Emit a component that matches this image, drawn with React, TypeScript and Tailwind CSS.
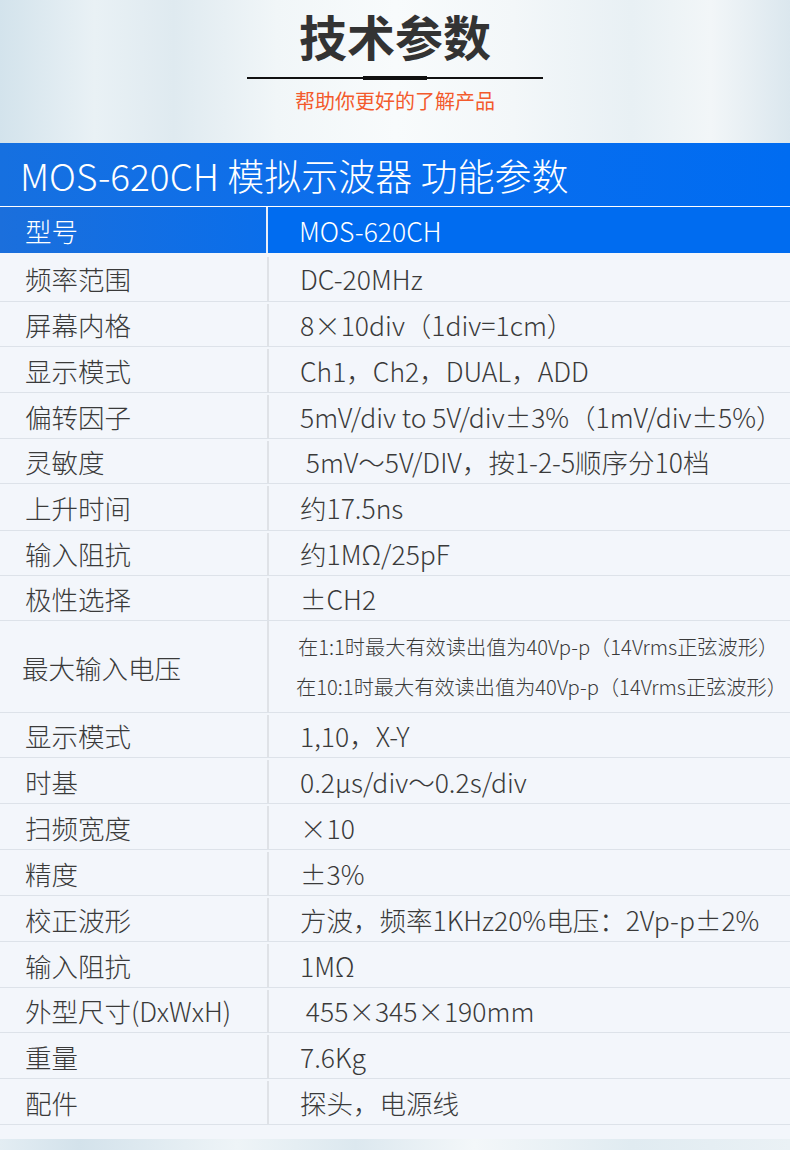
import React from "react";

const rows: { k: string; v: string | string[]; h: string }[] = [
  { k: "频率范围", v: "DC-20MHz", h: "h-[49px] pt-[4px]" },
  { k: "屏幕内格", v: "8×10div（1div=1cm）", h: "h-[45px] pt-[2px]" },
  { k: "显示模式", v: "Ch1，Ch2，DUAL，ADD", h: "h-[46px] pt-[2px]" },
  { k: "偏转因子", v: "5mV/div to 5V/div±3%（1mV/div±5%）", h: "h-[46px] pt-[2px]" },
  { k: "灵敏度", v: " 5mV～5V/DIV，按1-2-5顺序分10档", h: "h-[45px] pt-[2px]" },
  { k: "上升时间", v: "约17.5ns", h: "h-[47px] pt-[2px]" },
  { k: "输入阻抗", v: "约1MΩ/25pF", h: "h-[45px] pt-[2px]" },
  { k: "极性选择", v: "±CH2", h: "h-[45px] pt-[2px]" },
  {
    k: "最大输入电压",
    v: [
      "在1:1时最大有效读出值为40Vp-p（14Vrms正弦波形）",
      "在10:1时最大有效读出值为40Vp-p（14Vrms正弦波形）",
    ],
    h: "h-[92px]",
  },
  { k: "显示模式", v: "1,10，X-Y", h: "h-[45px] pt-[2px]" },
  { k: "时基", v: "0.2μs/div～0.2s/div", h: "h-[46px] pt-[2px]" },
  { k: "扫频宽度", v: "×10", h: "h-[46px] pt-[2px]" },
  { k: "精度", v: "±3%", h: "h-[46px] pt-[2px]" },
  { k: "校正波形", v: "方波，频率1KHz20%电压：2Vp-p±2%", h: "h-[46px] pt-[2px]" },
  { k: "输入阻抗", v: "1MΩ", h: "h-[46px] pt-[2px]" },
  { k: "外型尺寸(DxWxH)", v: " 455×345×190mm", h: "h-[45px] pt-[2px]" },
  { k: "重量", v: "7.6Kg", h: "h-[46px] pt-[2px]" },
  { k: "配件", v: "探头，电源线", h: "h-[46px] pt-[2px]" },
];

export default function App() {
  return (
    <div className="w-[790px] overflow-hidden font-['Noto_Sans_CJK_SC','Noto_Sans',sans-serif] text-[#3a3a3a] bg-[#f3f6fb]">
      {/* header */}
      <div className="h-[143px] flex flex-col items-center bg-[linear-gradient(90deg,#d3e3ec_0%,#e9f1f5_12%,#dfeaf0_22%,#f1f6f8_35%,#f8fbfc_50%,#f3f7f9_65%,#e8f0f4_80%,#f2f6f8_90%,#dbe7ee_100%)]">
        <div className="mt-[7px] h-[56px] leading-[56px] text-[48px] font-bold text-[#333333]">
          技术参数
        </div>
        <div className="relative mt-[13px] w-[296px] h-[4px] flex items-center">
          <div className="w-full h-[1.5px] bg-[#111]" />
          <div className="absolute left-[116px] top-0 w-[64px] h-[4px] bg-[#111]" />
        </div>
        <div className="mt-[7px] text-[20px] leading-[28px] text-[#f35a2c]">
          帮助你更好的了解产品
        </div>
      </div>

      {/* blue title */}
      <div className="h-[64px] flex items-center pl-[20px] pt-[2px] text-white text-[37px] font-light bg-[linear-gradient(90deg,#1670e0,#0a6eee_50%,#006cf1)] border-b border-white">
        MOS-620CH 模拟示波器 功能参数
      </div>
      <div className="h-[46px] flex text-white text-[26.5px] font-light">
        <div className="w-[268px] flex items-center pl-[25px] pt-[2px] bg-[linear-gradient(90deg,#1b6fdc,#0a6eea)] border-r-2 border-[#e8eef8]">
          型号
        </div>
        <div className="flex-1 flex items-center pl-[31px] pt-[2px] bg-[#006cf0]">MOS-620CH</div>
      </div>

      {/* rows */}
      <div className="bg-[#f3f6fb]">
        {rows.map((r, i) => {
          const multi = Array.isArray(r.v);
          return (
            <div
              key={i}
              className={`flex border-b border-[#dde2e9] text-[26.5px] font-light ${r.h}`}
            >
              <div
                className={`w-[269px] shrink-0 flex items-center border-r-2 border-[#dfe2e7] ${multi ? "pl-[22px] pt-[2px]" : "pl-[25px]"}`}
              >
                {r.k}
              </div>
              {multi ? (
                <div className="flex-1 flex flex-col justify-center text-[20.2px] leading-[40px]">
                  {(r.v as string[]).map((t, j) => (
                    <div key={j} className={j === 0 ? "pl-[29px]" : "pl-[27px]"}>
                      {t}
                    </div>
                  ))}
                </div>
              ) : (
                <div className="flex-1 flex items-center pl-[31px] whitespace-pre">
                  {r.v as string}
                </div>
              )}
            </div>
          );
        })}
      </div>
      <div className="h-[14px] bg-[#f3f6fb]" />
      <div className="h-[11px] bg-[linear-gradient(90deg,#e3edf3_0%,#d3e2eb_10%,#eef4f7_30%,#dce8ef_45%,#f3f7f9_60%,#e0ebf1_80%,#eaf1f5_100%)]" />
    </div>
  );
}
